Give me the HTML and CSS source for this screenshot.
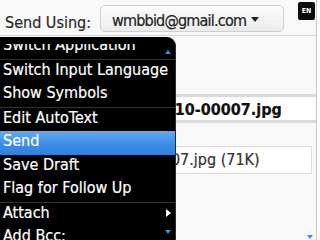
FILE: index.html
```html
<!DOCTYPE html>
<html lang="en">
<head>
    <meta charset="UTF-8">
    <meta name="viewport" content="width=device-width, initial-scale=1.0">
    <title>Compose Email</title>
    <link rel="stylesheet" href="styles.css">
</head>
<body>
    <div class="screen">
        <div class="main">
            <div class="header">
                <span class="label">Send Using:</span>
                <div class="select">
                    <span class="select-text">wmbbid@gmail.com</span>
                    <span class="caret"></span>
                </div>
                <span class="lang">EN</span>
            </div>

            <div class="subject">IMG00010-20101110-00007.jpg</div>
            <div class="attachment">20101110-00007.jpg (71K)</div>

            <span class="scroll-down"></span>
        </div>

        <div class="menu">
            <span class="menu-up"></span>
            <div class="menu-view">
                <ul class="menu-list">
                    <li class="menu-item">Switch Application</li>
                    <li class="menu-sep"></li>
                    <li class="menu-item">Switch Input Language</li>
                    <li class="menu-item">Show Symbols</li>
                    <li class="menu-sep"></li>
                    <li class="menu-item">Edit AutoText</li>
                    <li class="menu-item active">Send</li>
                    <li class="menu-item">Save Draft</li>
                    <li class="menu-item">Flag for Follow Up</li>
                    <li class="menu-sep"></li>
                    <li class="menu-item has-sub">Attach</li>
                    <li class="menu-item">Add Bcc:</li>
                </ul>
            </div>
            <span class="menu-down"></span>
        </div>
    </div>
</body>
</html>
```

FILE: styles.css
```css
* {
    margin: 0;
    padding: 0;
    box-sizing: border-box;
}

body {
    width: 320px;
    height: 240px;
    overflow: hidden;
    background-color: #ffffff;
    font-family: 'DejaVu Sans Condensed', 'DejaVu Sans', sans-serif;
    font-stretch: condensed;
    font-size: 16px;
    color: #222;
    -webkit-text-stroke: 0.2px;
}

.screen {
    position: relative;
    width: 320px;
    height: 240px;
}

.main {
    position: relative;
    width: 317px;
    height: 240px;
    background-color: #f8f8f8;
    border-right: 1px solid #c9c9c9;
}

.header {
    display: flex;
    align-items: flex-start;
    height: 36px;
    padding: 5px 1px 0 5px;
    border-bottom: 1px solid #d6d6d6;
}

.label {
    line-height: 27px;
    margin-top: 4px;
    color: #2a2a2a;
}

.select {
    display: flex;
    align-items: center;
    width: 184px;
    height: 27px;
    margin-left: 9px;
    padding-left: 11px;
    padding-top: 4px;
    border: 1px solid #cfcfcf;
    border-radius: 5px;
    background: linear-gradient(#fdfdfd, #ebebeb);
    color: #1e1e1e;
}

.select-text {
    letter-spacing: -0.8px;
}

.caret {
    width: 0;
    height: 0;
    margin-left: 5px;
    margin-top: -3px;
    border-left: 4px solid transparent;
    border-right: 4px solid transparent;
    border-top: 5px solid #222;
}

.lang {
    width: 17px;
    height: 18px;
    margin-left: auto;
    margin-top: -3px;
    border-radius: 2px;
    background-color: #0b0b0b;
    color: #fff;
    font-size: 7px;
    font-weight: bold;
    line-height: 18px;
    text-align: center;
    -webkit-text-stroke: 0;
}

.subject {
    margin-top: 58px;
    height: 29px;
    padding: 3px 0 0 27px;
    background-color: #fff;
    border-top: 3px solid #dadada;
    border-bottom: 3px solid #dadada;
    font-weight: bold;
    line-height: 20px;
    color: #111;
    white-space: nowrap;
    overflow: hidden;
}

.attachment {
    margin: 23px 4px 0 6px;
    height: 28px;
    padding-left: 58px;
    background-color: #fff;
    border: 1px solid #dcdcdc;
    line-height: 26px;
    color: #3a2f2f;
    white-space: nowrap;
    overflow: hidden;
}

.scroll-down {
    position: absolute;
    left: 307px;
    top: 235px;
    width: 0;
    height: 0;
    border-left: 3px solid transparent;
    border-right: 3px solid transparent;
    border-top: 4px solid #3d8ee6;
}

/* context menu over the compose screen */
.menu {
    position: absolute;
    left: 0;
    top: 37px;
    width: 176px;
    height: 203px;
    background-color: #000;
    border-right: 1px solid #2a2a2a;
    border-top-right-radius: 9px;
    padding-top: 7px;
}

.menu-view {
    height: 196px;
    overflow: hidden;
}

.menu-list {
    list-style: none;
    margin-top: -9px;
}

.menu-item {
    position: relative;
    height: 23.5px;
    padding-left: 3px;
    line-height: 20px;
    color: #fff;
    white-space: nowrap;
}

.menu-item.active {
    background: linear-gradient(#63acf4, #3d8de7 55%, #2f7fdf);
}

.menu-sep {
    height: 1px;
    background-color: #333;
}

.has-sub::after {
    content: '';
    position: absolute;
    right: 4px;
    top: 6px;
    border-top: 4.5px solid transparent;
    border-bottom: 4.5px solid transparent;
    border-left: 5px solid #fff;
}

.menu-up,
.menu-down {
    position: absolute;
    left: 165px;
    width: 0;
    height: 0;
    border-left: 3.5px solid transparent;
    border-right: 3.5px solid transparent;
}

.menu-up {
    top: 13px;
    border-bottom: 4px solid #3d8ee6;
}

.menu-down {
    top: 193px;
    border-top: 4px solid #3d8ee6;
}
```
